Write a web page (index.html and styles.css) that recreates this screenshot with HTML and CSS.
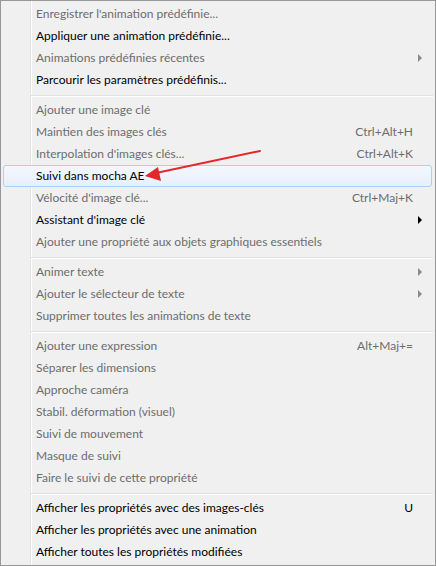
FILE: index.html
```html
<!DOCTYPE html>
<html lang="fr">
<head>
<meta charset="utf-8">
<title>Menu</title>
<link rel="stylesheet" href="styles.css">
</head>
<body>
<div class="menu">
  <div class="item dis"><span class="label">Enregistrer l'animation prédéfinie...</span></div>
  <div class="item"><span class="label">Appliquer une animation prédéfinie...</span></div>
  <div class="item dis"><span class="label">Animations prédéfinies récentes</span><span class="sub"></span></div>
  <div class="item"><span class="label">Parcourir les paramètres prédéfinis...</span></div>
  <div class="sep"></div>
  <div class="item dis"><span class="label">Ajouter une image clé</span></div>
  <div class="item dis"><span class="label">Maintien des images clés</span><span class="key">Ctrl+Alt+H</span></div>
  <div class="item dis"><span class="label">Interpolation d'images clés...</span><span class="key">Ctrl+Alt+K</span></div>
  <div class="item hot"><span class="label">Suivi dans mocha AE</span></div>
  <div class="item dis"><span class="label">Vélocité d'image clé...</span><span class="key">Ctrl+Maj+K</span></div>
  <div class="item"><span class="label">Assistant d'image clé</span><span class="sub"></span></div>
  <div class="item dis"><span class="label">Ajouter une propriété aux objets graphiques essentiels</span></div>
  <div class="sep"></div>
  <div class="item dis"><span class="label">Animer texte</span><span class="sub"></span></div>
  <div class="item dis"><span class="label">Ajouter le sélecteur de texte</span><span class="sub"></span></div>
  <div class="item dis"><span class="label">Supprimer toutes les animations de texte</span></div>
  <div class="sep"></div>
  <div class="item dis"><span class="label">Ajouter une expression</span><span class="key">Alt+Maj+=</span></div>
  <div class="item dis"><span class="label">Séparer les dimensions</span></div>
  <div class="item dis"><span class="label">Approche caméra</span></div>
  <div class="item dis"><span class="label">Stabil. déformation (visuel)</span></div>
  <div class="item dis"><span class="label">Suivi de mouvement</span></div>
  <div class="item dis"><span class="label">Masque de suivi</span></div>
  <div class="item dis"><span class="label">Faire le suivi de cette propriété</span></div>
  <div class="sep"></div>
  <div class="item"><span class="label">Afficher les propriétés avec des images-clés</span><span class="key">U</span></div>
  <div class="item"><span class="label">Afficher les propriétés avec une animation</span></div>
  <div class="item"><span class="label">Afficher toutes les propriétés modifiées</span></div>

  <svg class="callout" width="436" height="566" viewBox="0 0 436 566">
    <line x1="260" y1="151" x2="156" y2="173" stroke="#e5262b" stroke-width="2" stroke-linecap="round"/>
    <polygon points="145,176 158,167 161,181" fill="#e5262b"/>
  </svg>
</div>
</body>
</html>
```

FILE: styles.css
```css
html, body {
  margin: 0;
  padding: 0;
  background: #f0f0f0;
}

.menu {
  position: relative;
  box-sizing: border-box;
  width: 436px;
  height: 566px;
  padding: 2px;
  border: 1px solid #979797;
  background:
    linear-gradient(to right, transparent 29px, #e2e3e3 29px, #e2e3e3 30px, #ffffff 30px, #ffffff 31px, transparent 31px),
    #f0f0f0;
  font-family: Lato, "Noto Sans", sans-serif;
  font-size: 12px;
  color: #000;
}

.item {
  box-sizing: border-box;
  height: 22px;
  display: grid;
  grid-template-columns: 1fr auto 18px;
  align-items: center;
  padding-left: 32px;
  padding-bottom: 1px;
  white-space: nowrap;
  border: 1px solid transparent;
  margin-right: 1px;
  border-radius: 3px;
}

.label {
  grid-column: 1;
}

.key {
  grid-column: 2;
  text-align: right;
}

.sub {
  grid-column: 3;
  justify-self: start;
  margin-left: 5px;
  width: 0;
  height: 0;
  border-top: 4px solid transparent;
  border-bottom: 4px solid transparent;
  border-left: 4px solid #000;
}

.dis {
  color: #6d6d6d;
}

.dis .sub {
  border-left-color: #8a8a8a;
}

.hot {
  border-color: #aecff7;
  background: linear-gradient(to bottom, #f3f8fe, #e6effb);
}

.sep {
  height: 8px;
  margin-left: 28px;
  background:
    linear-gradient(to bottom, transparent 4px, #e0e0e0 4px, #e0e0e0 5px, #ffffff 5px, #ffffff 6px, transparent 6px);
}

.callout {
  position: absolute;
  left: -1px;
  top: -1px;
  pointer-events: none;
}
```
